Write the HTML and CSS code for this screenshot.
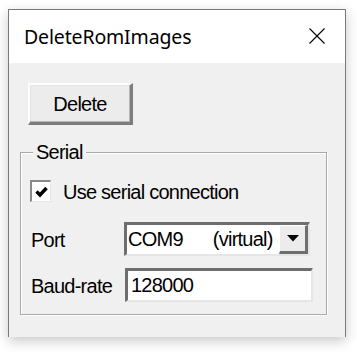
FILE: index.html
```html
<!DOCTYPE html>
<html>
<head>
<meta charset="utf-8">
<link rel="stylesheet" href="styles.css">
</head>
<body>
<div class="window">
  <div class="titlebar">
    <span class="title">DeleteRomImages</span>
    <svg class="close" width="16" height="16" viewBox="0 0 16 16"><path d="M0.5 0.5 L15.5 15.5 M15.5 0.5 L0.5 15.5" stroke="#000" stroke-width="1.1" fill="none"/></svg>
  </div>
  <div class="content">
    <div class="btn">Delete</div>
    <div class="group">
      <div class="legend">Serial</div>
      <div class="check-row">
        <span class="checkbox"><svg width="13" height="12" viewBox="0 0 13 12"><path d="M1.5 5.5 L5 9 L11.5 2" stroke="#000" stroke-width="3.4" fill="none"/></svg></span>
        <span class="label">Use serial connection</span>
      </div>
      <div class="field-row port-row">
        <span class="field-label">Port</span>
        <div class="combo">
          <span class="combo-text"><span>COM9</span><span class="virt">(virtual)</span></span>
          <span class="drop"><svg width="12" height="7" viewBox="0 0 12 7"><path d="M0 0 H12 L6 6.5 Z" fill="#000"/></svg></span>
        </div>
      </div>
      <div class="field-row baud-row">
        <span class="field-label">Baud-rate</span>
        <div class="textbox">128000</div>
      </div>
    </div>
  </div>
</div>
</body>
</html>
```
FILE: styles.css
```css
html, body {
  margin: 0;
  padding: 0;
  background: #ffffff;
}
body {
  width: 357px;
  height: 352px;
  overflow: hidden;
  padding-top: 9px;
  padding-left: 8px;
  box-sizing: border-box;
}
.window {
  width: 338px;
  height: 328px;
  box-sizing: border-box;
  border: 1px solid #7a7a7a;
  border-bottom: none;
  background: #f0f0f0;
  box-shadow: 0 4px 12px rgba(0,0,0,0.22);
  display: flex;
  flex-direction: column;
}
.titlebar {
  height: 53px;
  background: #ffffff;
  display: flex;
  align-items: center;
  justify-content: space-between;
  padding: 0 20px 0 15px;
  flex: none;
}
.title {
  font-family: "Noto Sans", "Open Sans", sans-serif;
  font-size: 19.5px;
  letter-spacing: -0.15px;
  color: #000;
  margin-top: -1px;
}
.close {
  display: block;
  margin-top: -2px;
}
.content {
  flex: 1;
  padding: 20px 0 0 11px;
  font-family: "Liberation Sans", Arial, sans-serif;
  font-size: 20px;
  letter-spacing: -0.75px;
  color: #000;
}
.btn {
  width: 105px;
  height: 42px;
  box-sizing: border-box;
  margin-left: 8px;
  border-top: 2px solid #fdfdfd;
  border-left: 2px solid #fdfdfd;
  border-right: 3px solid #7d7d7d;
  border-bottom: 3px solid #7d7d7d;
  background: #ececec;
  display: flex;
  align-items: center;
  justify-content: center;
  box-shadow: inset -1px -1px 0 #b5b5b5, inset 1px 1px 0 #e3e3e3;
  padding-top: 1px;
}
.group {
  position: relative;
  margin-top: 27px;
  width: 307px;
  height: 163px;
  box-sizing: border-box;
  border: 1px solid #a9a9a9;
  box-shadow: inset 1px 1px 0 #ffffff, 1px 1px 0 #ffffff;
  padding: 27px 0 0 9px;
}
.legend {
  position: absolute;
  top: -11px;
  left: 12px;
  background: #f0f0f0;
  padding: 0 3px;
  line-height: 20px;
}
.check-row {
  display: flex;
  align-items: center;
  height: 22px;
}
.checkbox {
  width: 21px;
  height: 22px;
  box-sizing: border-box;
  background: #fff;
  border-top: 2px solid #8a8a8a;
  border-left: 2px solid #8a8a8a;
  border-right: 1px solid #e8e8e8;
  border-bottom: 1px solid #e8e8e8;
  display: flex;
  align-items: center;
  justify-content: center;
  flex: none;
}
.checkbox svg { display: block; }
.label {
  margin-left: 12px;
  padding-top: 2px;
}
.field-row {
  display: flex;
  align-items: center;
}
.port-row { margin-top: 20px; }
.baud-row { margin-top: 12px; }
.field-label {
  width: 93px;
  flex: none;
  padding-left: 1px;
  padding-top: 3px;
}
.combo {
  width: 186px;
  height: 34px;
  box-sizing: border-box;
  border-top: 3px solid #6e6e6e;
  border-left: 3px solid #6e6e6e;
  border-right: 2px solid #e6e6e6;
  border-bottom: 2px solid #e6e6e6;
  background: #fff;
  display: flex;
  align-items: stretch;
}
.combo-text {
  flex: 1;
  display: flex;
  align-items: center;
  padding-left: 1px;
}
.virt { margin-left: 30px; }
.drop {
  width: 29px;
  box-sizing: border-box;
  background: #ececec;
  border-top: 1px solid #fff;
  border-left: 1px solid #fff;
  border-right: 3px solid #6e6e6e;
  border-bottom: 3px solid #6e6e6e;
  display: flex;
  align-items: center;
  justify-content: center;
  flex: none;
}
.drop svg { display: block; }
.textbox {
  margin-left: 1px;
  width: 188px;
  height: 34px;
  box-sizing: border-box;
  border-top: 3px solid #6e6e6e;
  border-left: 3px solid #6e6e6e;
  border-right: 2px solid #e6e6e6;
  border-bottom: 2px solid #e6e6e6;
  background: #fff;
  padding-left: 3px;
  display: flex;
  align-items: center;
}
```
